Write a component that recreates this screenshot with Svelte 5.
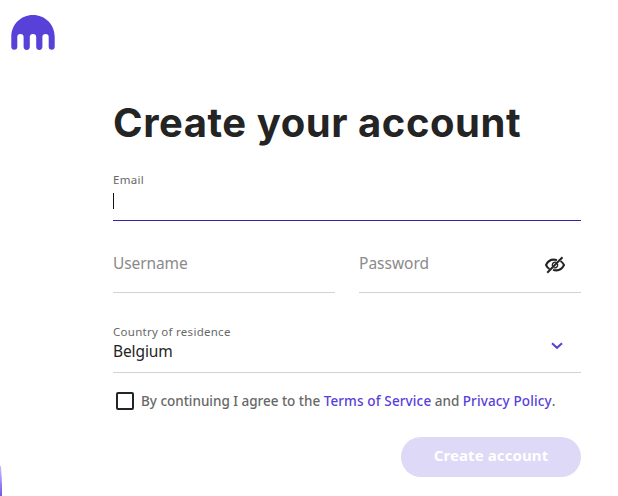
<script>
  let agreed = $state(false);
</script>

<div class="page">
  <header>
    <svg class="logo" width="44" height="35" viewBox="0 0 44 35" aria-label="Kraken">
      <path fill="#5741d9" d="M22 0C9.8 0 .3 9.700 .3 21.600V31.800a3 3 0 0 0 6 0V22.100a3.150 3.150 0 0 1 6.300 0V31.800a3.100 3.100 0 0 0 6.200 0V22.100a3.200 3.200 0 0 1 6.400 0V31.800a3.100 3.100 0 0 0 6.200 0V22.100a3.150 3.150 0 0 1 6.300 0V31.800a3 3 0 0 0 6 0V21.600C43.700 9.700 34.200 0 22 0Z" />
    </svg>
  </header>

  <main>
    <h1>Create your account</h1>

    <div class="field email">
      <span class="label">Email</span>
      <span class="caret"></span>
    </div>

    <div class="row">
      <div class="field plain"><span class="placeholder user">Username</span></div>
      <div class="field plain">
        <span class="placeholder">Password</span>
        <svg class="eye" width="22" height="18" viewBox="0 0 22 18" fill="none" stroke="#242424" stroke-width="2">
          <path d="M13 4.100C7.500 2.600 3.800 5.200 2 9c.8 1.800 2 3.100 3.500 4M9 13.900c5.500 1.500 9.200-1.100 11-4.900-.8-1.800-2-3.100-3.500-4" />
          <path d="M12.300 6.300c-2-.8-4 .7-4 2.700 0 .5.100.9.300 1.300M9.700 11.700c2 .8 4-.7 4-2.700 0-.5-.1-.9-.3-1.300" stroke-width="1.300" />
          <path d="M3.200 16.700 18.500 1.200" />
        </svg>
      </div>
    </div>

    <div class="field country">
      <div class="values">
        <span class="label">Country of residence</span>
        <span class="value">Belgium</span>
      </div>
      <svg class="chevron" width="12" height="8" viewBox="0 0 12 8" fill="none" stroke="#5741d9" stroke-width="2">
        <path d="M1 1.200 6 5.800 11 1.200" />
      </svg>
    </div>

    <div class="agree">
      <button class="box" role="checkbox" aria-checked={agreed} aria-label="Agree" onclick={() => (agreed = !agreed)}></button>
      <p>By continuing I agree to the{' '}<span class="link">Terms of Service</span>{' '}and{' '}<span class="link">Privacy Policy</span>.</p>
    </div>

    <button class="submit" disabled>Create account</button>
  </main>
  <div class="streak"></div>
</div>

<style>
  :global(body) { background: #fff; }
  .page {
    position: relative;
    box-sizing: border-box;
    width: 618px;
    height: 496px;
    overflow: hidden;
    background: #fff;
    font-family: "Noto Sans", "Open Sans", sans-serif;
    color: #242424;
  }
  header { padding: 15px 0 0 11px; height: 35px; }
  svg { display: block; flex: none; }
  main { width: 468px; margin: 49px 0 0 113px; display: flex; flex-direction: column; }
  h1 {
    margin: 0;
    font: 700 40px/48px Inter, sans-serif;
    letter-spacing: 0.55px;
    white-space: nowrap;
  }
  .field { box-sizing: border-box; border-bottom: 1px solid #d3d3d3; white-space: nowrap; }
  .label { display: block; font-size: 11.500px; line-height: 16px; letter-spacing: 0.27px; color: #686868; }
  .email { height: 49px; margin-top: 25px; border-color: #3621a8; }
  .caret { display: block; width: 1px; height: 16px; margin-top: 5px; background: #111; }
  .row { display: flex; gap: 24px; margin-top: 30px; }
  .plain { flex: 1; height: 42px; display: flex; justify-content: space-between; align-items: flex-start; }
  .placeholder { font-size: 15.500px; line-height: 24px; color: #8a8a8a; }
  .user { letter-spacing: -0.1px; }
  .eye { margin: 5px 15px 0 0; }
  .country { height: 49px; margin-top: 31px; display: flex; justify-content: space-between; }
  .value { display: block; font-size: 15.500px; line-height: 22px; letter-spacing: -0.1px; }
  .chevron { margin: 18px 18px 0 0; }
  .agree { display: flex; align-items: center; height: 20px; margin: 18px 0 0 3px; }
  .box { box-sizing: border-box; width: 18px; height: 18px; padding: 0; border: 2px solid #242424; border-radius: 2px; background: #fff; flex: none; }
  p { margin: 0 0 1px 7px; font-size: 13.500px; font-weight: 500; line-height: 20px; letter-spacing: -0.02px; color: #686868; white-space: pre; }
  .link { color: #5741d9; letter-spacing: 0.13px; }
  .submit {
    align-self: flex-end;
    width: 180px;
    height: 40px;
    margin-top: 26px;
    padding: 0 0 4px;
    border: 0;
    border-radius: 20px;
    background: #ddd9f7;
    color: #fff;
    font: 700 15px/20px "Noto Sans", sans-serif;
    letter-spacing: 0.1px;
  }
  .streak {
    position: absolute;
    left: 0;
    bottom: 0;
    width: 2px;
    height: 30px;
    background: linear-gradient(#c9bcff, #7558e8);
    clip-path: polygon(0 0, 50% 0, 100% 60%, 100% 100%, 0 100%);
  }
</style>
